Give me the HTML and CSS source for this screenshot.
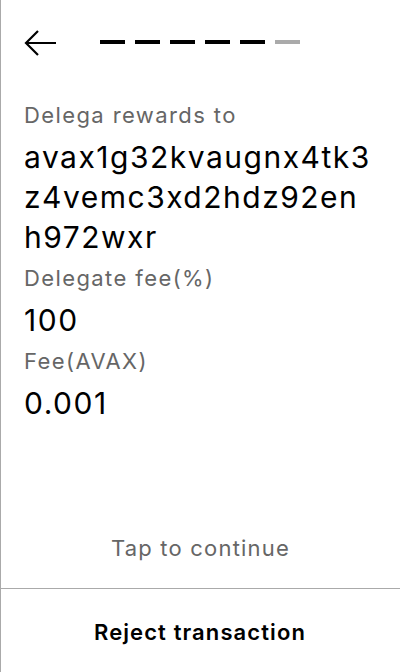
FILE: index.html
```html
<!DOCTYPE html>
<html>
<head>
<meta charset="utf-8">
<link rel="stylesheet" href="styles.css">
</head>
<body>
<div class="screen">
  <header class="top">
    <svg class="back" width="35" height="30" viewBox="0 0 35 30">
      <path d="M33 14H3M15 2L3 14L15 26" fill="none" stroke="#000" stroke-width="2.2"/>
    </svg>
    <div class="steps">
      <span class="step"></span><span class="step"></span><span class="step"></span><span class="step"></span><span class="step"></span><span class="step off"></span>
    </div>
  </header>
  <main class="content">
    <div class="label">Delega rewards to</div>
    <div class="value addr">avax1g32kvaugnx4tk3z4vemc3xd2hdz92enh972wxr</div>
    <div class="label">Delegate fee(%)</div>
    <div class="value">100</div>
    <div class="label">Fee(AVAX)</div>
    <div class="value">0.001</div>
  </main>
  <div class="tap">Tap to continue</div>
  <div class="reject">Reject transaction</div>
</div>
</body>
</html>
```
FILE: styles.css
```css
* { box-sizing: border-box; }
html, body { margin: 0; padding: 0; background: #fff; }
body { font-family: Inter, "Noto Sans", sans-serif; color: #000; }
.screen {
  width: 400px;
  height: 672px;
  border-left: 1px solid #aaa;
  display: flex;
  flex-direction: column;
}
.top {
  display: flex;
  align-items: flex-start;
  padding: 28px 0 0 22px;
  height: 94px;
}
.back { display: block; margin-top: 1px; }
.steps {
  display: flex;
  gap: 10px;
  margin-left: 42px;
  margin-top: 12px;
}
.step { width: 25px; height: 4px; background: #000; }
.step.off { background: #aaa; }
.content {
  padding: 0 28px 0 23px;
  flex: 1;
}
.label {
  font-size: 22px;
  line-height: 43px;
  letter-spacing: 1.4px;
  color: #666;
}
.value {
  font-size: 30px;
  line-height: 40px;
  letter-spacing: 1.5px;
}
.addr { word-break: break-all; }
.tap {
  text-align: center;
  font-size: 22px;
  letter-spacing: 1.2px;
  color: #666;
  line-height: 24px;
  padding-bottom: 28px;
}
.reject {
  border-top: 1px solid #aaa;
  margin-left: -1px;
  height: 84px;
  display: flex;
  align-items: center;
  justify-content: center;
  font-size: 22px;
  font-weight: 600;
  letter-spacing: 1.1px;
  padding-top: 2px;
}
```
